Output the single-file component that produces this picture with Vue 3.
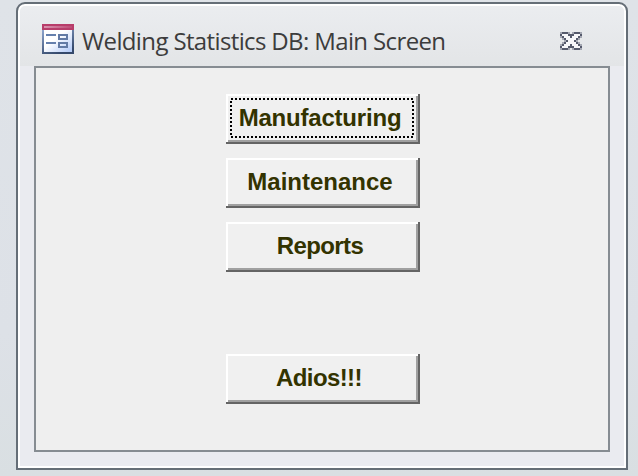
<script setup>
const actions = [
  { label: 'Manufacturing', kind: 'focused' },
  { label: 'Maintenance', kind: 'plain' },
  { label: 'Reports', kind: 'tight' },
  { label: 'Adios!!!', kind: 'tight exit' },
]
</script>

<template>
  <main class="desktop">
    <section class="window">
      <header class="titlebar">
        <svg class="form-icon" viewBox="0 0 16 15" shape-rendering="crispEdges">
          <defs>
            <linearGradient id="paper" x1="0" y1="0" x2="1" y2="1">
              <stop offset="0.4" stop-color="#fff" />
              <stop offset="1" stop-color="#b0c8f7" />
            </linearGradient>
            <linearGradient id="edge" x1="0" y1="0" x2="0.5" y2="1">
              <stop offset="0" stop-color="#8da5ce" />
              <stop offset="1" stop-color="#35496b" />
            </linearGradient>
            <linearGradient id="band" x1="0" y1="0" x2="1" y2="0">
              <stop offset="0" stop-color="#d993ae" />
              <stop offset="1" stop-color="#bd4b76" />
            </linearGradient>
          </defs>
          <path fill="url(#edge)" d="M0 3h16v12H0z" />
          <path fill="url(#paper)" d="M1 3h14v11H1z" />
          <path fill="#b83d6a" d="M0 0h16v3H0z" />
          <path fill="url(#band)" d="M1 1h14v1H1z" />
          <path fill="#6580ad" d="M2 5h5v1H2zM2 9h5v1H2z" />
          <path fill="#637ba5" fill-rule="evenodd" d="M8 5h5v3H8zM9 6v1h3V6zM8 9h5v3H8zM9 10v1h3v-1z" />
        </svg>
        <h1 class="title">Welding Statistics DB: Main Screen</h1>
        <svg class="close" viewBox="0 0 11 9" shape-rendering="crispEdges">
          <path fill="#a5a8b3" d="M0 0h5v1h1V0h5v3h-1v1H9v1h1v1h1v3H6V8H5v1H0V6h1V5h1V4H1V3H0z" />
          <path fill="#555a6c" d="M1 0h3v1h3V0h3v1h1v1h-1v1H9v1H8v1h1v1h1v1h1v1h-1v1H7V8H4v1H1V8H0V7h1V6h1V5h1V4H2V3H1V2H0V1h1z" />
          <path fill="#f7f7fa" d="M1 1h3v1h1v1h1V2h1V1h3v1H9v1H8v1H7v1h1v1h1v1h1v1H7V7H6V6H5v1H4v1H1V7h1V6h1V5h1V4H3V3H2V2H1z" />
        </svg>
      </header>
      <div class="panel">
        <button v-for="a in actions" :key="a.label" class="action" :class="a.kind" type="button">
          <span class="label">{{ a.label }}</span>
          <svg v-if="a.kind === 'focused'" class="focus" viewBox="0 0 184 40" shape-rendering="crispEdges">
            <rect x="1" y="1" width="182" height="38" />
          </svg>
        </button>
      </div>
    </section>
  </main>
</template>

<style>
body {
  margin: 0;
}
</style>

<style scoped>
.desktop {
  box-sizing: border-box;
  width: 638px;
  height: 476px;
  padding: 2px 10px 6px 16px;
  background: linear-gradient(#dfe3e8, #dde1e7 70%, #d9dfe2);
  overflow: hidden;
}
.window {
  box-sizing: border-box;
  height: 468px;
  display: flex;
  flex-direction: column;
  padding: 0 14px 16px;
  border: 2px solid #656e77;
  border-radius: 9px 9px 0 0;
  background: linear-gradient(#ebedf0, #e3e5e7) top / 100% 62px no-repeat, #eaebf0;
  box-shadow: inset 0 0 0 2px #fff;
}
.titlebar {
  display: flex;
  height: 62px;
  flex: none;
}
.form-icon {
  width: 32px;
  height: 30px;
  margin: 20px 0 0 10px;
}
.title {
  margin: 20px 0 0 8px;
  width: 478px;
  flex: none;
  font: 400 24px/34px 'Open Sans', sans-serif;
  letter-spacing: -0.63px;
  color: #3c3c3c;
  white-space: nowrap;
}
.close {
  width: 22px;
  height: 18px;
  margin-top: 28px;
}
.panel {
  box-sizing: border-box;
  flex: 1;
  margin: 0 2px;
  padding: 26px 0 0 190px;
  display: flex;
  flex-direction: column;
  gap: 14px;
  border: 2px solid #868c92;
  background: #efefef;
}
.action {
  position: relative;
  box-sizing: border-box;
  width: 194px;
  height: 50px;
  padding: 0 6px 0 0;
  border: 0;
  border-radius: 0;
  background: #f0f0f0;
  box-shadow: inset -2px -2px #646464, inset 2px 2px #fff, inset -4px -4px #a0a0a0;
  color: #333300;
  font: 700 24px/48px 'Liberation Sans', Arial, sans-serif;
  text-align: center;
}
.label {
  display: block;
  height: 50px;
}
.focused .label {
  letter-spacing: -0.2px;
}
.tight .label {
  letter-spacing: -0.6px;
}
.exit {
  margin-top: 68px;
}
.exit .label {
  margin-left: -2px;
}
.focus {
  position: absolute;
  left: 4px;
  top: 4px;
  width: 184px;
  height: 40px;
}
.focus rect {
  fill: none;
  stroke: #000;
  stroke-width: 2;
  stroke-dasharray: 2 2;
}
</style>
